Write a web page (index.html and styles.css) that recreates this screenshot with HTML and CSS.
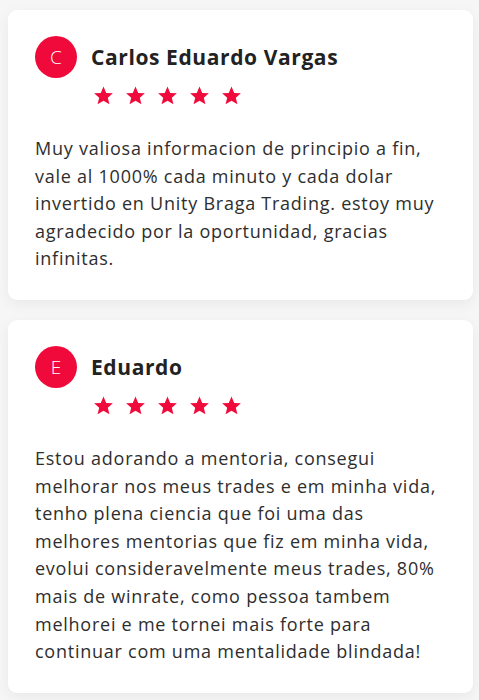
FILE: index.html
```html
<!DOCTYPE html>
<html lang="es">
<head>
<meta charset="utf-8">
<link rel="stylesheet" href="styles.css">
</head>
<body>
<div class="list">
  <div class="card">
    <div class="head">
      <div class="avatar">C</div>
      <div class="who">
        <div class="name">Carlos Eduardo Vargas</div>
        <div class="stars">
          <svg viewBox="0 0 24 24"><path d="M12 1.8l3.1 7.2 7.6.5-5.8 5 1.9 7.6L12 18l-6.8 4.1 1.9-7.6-5.8-5 7.6-.5z"/></svg>
          <svg viewBox="0 0 24 24"><path d="M12 1.8l3.1 7.2 7.6.5-5.8 5 1.9 7.6L12 18l-6.8 4.1 1.9-7.6-5.8-5 7.6-.5z"/></svg>
          <svg viewBox="0 0 24 24"><path d="M12 1.8l3.1 7.2 7.6.5-5.8 5 1.9 7.6L12 18l-6.8 4.1 1.9-7.6-5.8-5 7.6-.5z"/></svg>
          <svg viewBox="0 0 24 24"><path d="M12 1.8l3.1 7.2 7.6.5-5.8 5 1.9 7.6L12 18l-6.8 4.1 1.9-7.6-5.8-5 7.6-.5z"/></svg>
          <svg viewBox="0 0 24 24"><path d="M12 1.8l3.1 7.2 7.6.5-5.8 5 1.9 7.6L12 18l-6.8 4.1 1.9-7.6-5.8-5 7.6-.5z"/></svg>
        </div>
      </div>
    </div>
    <p class="text">Muy valiosa informacion de principio a fin, vale al 1000% cada minuto y cada dolar invertido en Unity Braga Trading. estoy muy agradecido por la oportunidad, gracias infinitas.</p>
  </div>
  <div class="card">
    <div class="head">
      <div class="avatar">E</div>
      <div class="who">
        <div class="name">Eduardo</div>
        <div class="stars">
          <svg viewBox="0 0 24 24"><path d="M12 1.8l3.1 7.2 7.6.5-5.8 5 1.9 7.6L12 18l-6.8 4.1 1.9-7.6-5.8-5 7.6-.5z"/></svg>
          <svg viewBox="0 0 24 24"><path d="M12 1.8l3.1 7.2 7.6.5-5.8 5 1.9 7.6L12 18l-6.8 4.1 1.9-7.6-5.8-5 7.6-.5z"/></svg>
          <svg viewBox="0 0 24 24"><path d="M12 1.8l3.1 7.2 7.6.5-5.8 5 1.9 7.6L12 18l-6.8 4.1 1.9-7.6-5.8-5 7.6-.5z"/></svg>
          <svg viewBox="0 0 24 24"><path d="M12 1.8l3.1 7.2 7.6.5-5.8 5 1.9 7.6L12 18l-6.8 4.1 1.9-7.6-5.8-5 7.6-.5z"/></svg>
          <svg viewBox="0 0 24 24"><path d="M12 1.8l3.1 7.2 7.6.5-5.8 5 1.9 7.6L12 18l-6.8 4.1 1.9-7.6-5.8-5 7.6-.5z"/></svg>
        </div>
      </div>
    </div>
    <p class="text">Estou adorando a mentoria, consegui melhorar nos meus trades e em minha vida, tenho plena ciencia que foi uma das melhores mentorias que fiz em minha vida, evolui consideravelmente meus trades, 80% mais de winrate, como pessoa tambem melhorei e me tornei mais forte para continuar com uma mentalidade blindada!</p>
  </div>
</div>
</body>
</html>
```
FILE: styles.css
```css
html, body {
  margin: 0;
  padding: 0;
  background: #f6f6f6;
}
body {
  font-family: "Open Sans", "Noto Sans", sans-serif;
  color: #2b2b2b;
}
.list {
  display: flex;
  flex-direction: column;
  gap: 20px;
  padding: 10px 6px 9px 8px;
}
.card {
  background: #fff;
  border-radius: 9px;
  box-shadow: 0 4px 14px rgba(0, 0, 0, 0.06);
  padding: 26px 23px 27px 27px;
}
.head {
  display: flex;
  gap: 14px;
  align-items: flex-start;
}
.avatar {
  width: 42px;
  height: 42px;
  border-radius: 50%;
  background: #f00a3b;
  color: #fff;
  display: flex;
  align-items: center;
  justify-content: center;
  font-size: 19px;
  font-weight: 300;
  flex: none;
}
.who {
  display: flex;
  flex-direction: column;
  padding-top: 6px;
}
.name {
  font-size: 21px;
  font-weight: 700;
  line-height: 30px;
  color: #222;
  letter-spacing: 0.6px;
}
.stars {
  display: flex;
  gap: 11px;
  margin-top: 13px;
  margin-left: 2px;
}
.stars svg {
  width: 21px;
  height: 21px;
  fill: #f00a3b;
}
.text {
  margin: 29px 0 0 0;
  font-size: 18px;
  line-height: 27.6px;
  letter-spacing: 0.75px;
  color: #2e2e2e;
}
```
